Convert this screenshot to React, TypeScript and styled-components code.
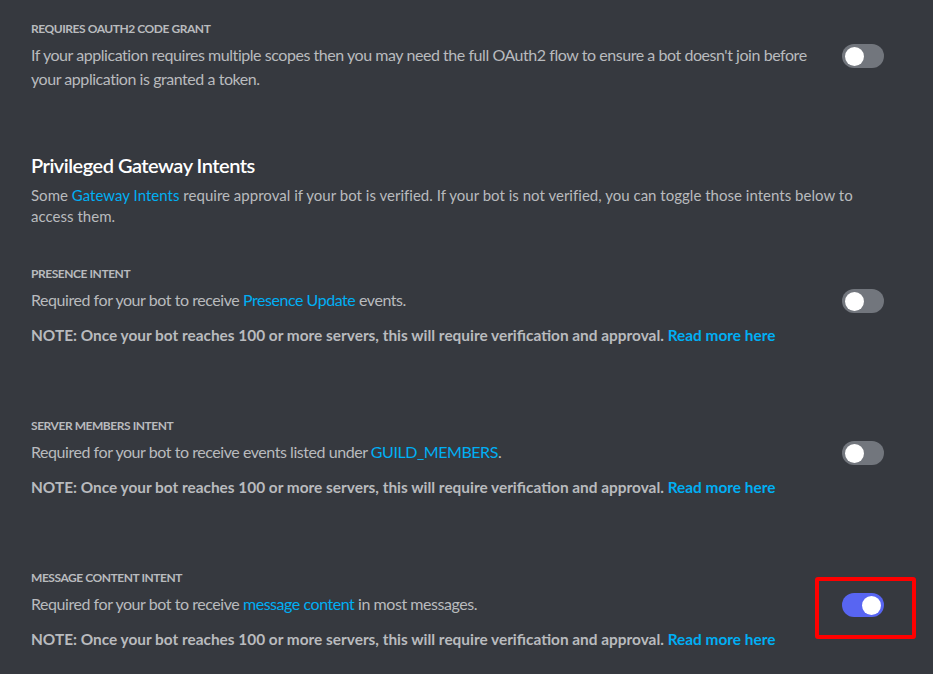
import React from "react";
import styled, { createGlobalStyle } from "styled-components";

const GlobalStyle = createGlobalStyle`
  html, body {
    margin: 0;
    padding: 0;
    background: #36393f;
  }
  body {
    font-family: Lato, "Noto Sans", "Liberation Sans", sans-serif;
    -webkit-font-smoothing: antialiased;
  }
`;

const Page = styled.div`
  width: 933px;
  height: 674px;
  box-sizing: border-box;
  padding: 20px 49px 0 31px;
  background: #36393f;
  overflow: hidden;
`;

const Block = styled.section<{ gap: number }>`
  margin-top: ${(p) => p.gap}px;
`;

const Label = styled.h5`
  margin: 0;
  padding-top: 1px;
  font-size: 12px;
  line-height: 16px;
  font-weight: 700;
  letter-spacing: -0.45px;
  text-transform: uppercase;
  color: #b9bbbe;
`;

const Row = styled.div`
  display: flex;
  justify-content: space-between;
  align-items: flex-start;
  margin-top: 6px;
`;

const Description = styled.div`
  max-width: 790px;
  font-size: 16px;
  line-height: 24px;
  letter-spacing: -0.45px;
  color: #b9bbbe;
`;

const Link = styled.a`
  color: #00aff4;
  text-decoration: none;
`;

const Note = styled.div`
  margin-top: 12px;
  font-size: 15.4px;
  line-height: 20px;
  font-weight: 700;
  color: #b9bbbe;
`;

const Heading = styled.h2`
  margin: 0;
  font-size: 20px;
  line-height: 24px;
  font-weight: 600;
  letter-spacing: -0.5px;
  color: #ffffff;
`;

const Intro = styled.p`
  margin: 8px 0 0;
  font-size: 15px;
  line-height: 21px;
  letter-spacing: 0.02px;
  color: #b9bbbe;
`;

const SwitchWrap = styled.div`
  position: relative;
  flex: none;
  margin-top: 1px;
`;

const Track = styled.div<{ on: boolean }>`
  width: 42px;
  height: 24px;
  border-radius: 12px;
  background: ${(p) => (p.on ? "#5865f2" : "#72767d")};
  display: flex;
  align-items: center;
  justify-content: ${(p) => (p.on ? "flex-end" : "flex-start")};
  padding: 0 3px;
  box-sizing: border-box;
`;

const Knob = styled.div`
  width: 19px;
  height: 19px;
  border-radius: 50%;
  background: #ffffff;
`;

const Highlight = styled.div`
  position: absolute;
  left: -27px;
  top: -16px;
  width: 93px;
  height: 54px;
  border: 4px solid #ff0000;
  border-radius: 3px;
  pointer-events: none;
`;

function Switch({ on, marked }: { on?: boolean; marked?: boolean }) {
  return (
    <SwitchWrap>
      <Track on={!!on}>
        <Knob />
      </Track>
      {marked && <Highlight />}
    </SwitchWrap>
  );
}

const NOTE =
  "NOTE: Once your bot reaches 100 or more servers, this will require verification and approval. ";

function Intent({
  title,
  children,
  on,
  marked,
  gap,
}: {
  title: string;
  children: React.ReactNode;
  on?: boolean;
  marked?: boolean;
  gap: number;
}) {
  return (
    <Block gap={gap}>
      <Label>{title}</Label>
      <Row>
        <Description>{children}</Description>
        <Switch on={on} marked={marked} />
      </Row>
      <Note>
        {NOTE}
        <Link href="#">Read more here</Link>
      </Note>
    </Block>
  );
}

export default function App() {
  return (
    <>
      <GlobalStyle />
      <Page>
        <Block gap={0}>
          <Label>Requires OAuth2 Code Grant</Label>
          <Row>
            <Description>
              If your application requires multiple scopes then you may need the
              full OAuth2 flow to ensure a bot doesn't join before your
              application is granted a token.
            </Description>
            <Switch />
          </Row>
        </Block>

        <Block gap={62}>
          <Heading>Privileged Gateway Intents</Heading>
          <Intro>
            Some <Link href="#">Gateway Intents</Link> require approval if your
            bot is verified. If your bot is not verified, you can toggle those
            intents below to access them.
          </Intro>
        </Block>

        <Intent title="Presence Intent" gap={38}>
          Required for your bot to receive{" "}
          <Link href="#">Presence Update</Link> events.
        </Intent>

        <Intent title="Server Members Intent" gap={72}>
          Required for your bot to receive events listed under{" "}
          <Link href="#">GUILD_MEMBERS</Link>.
        </Intent>

        <Intent title="Message Content Intent" gap={72} on marked>
          Required for your bot to receive{" "}
          <Link href="#">message content</Link> in most messages.
        </Intent>
      </Page>
    </>
  );
}
